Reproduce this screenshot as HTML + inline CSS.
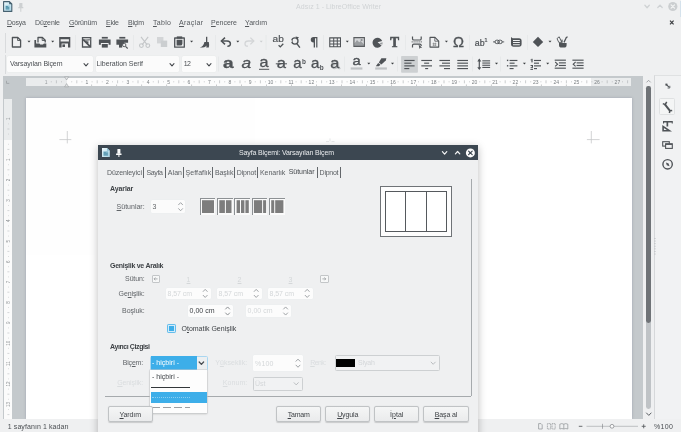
<!DOCTYPE html>
<html lang="tr">
<head>
<meta charset="utf-8">
<title>Adsız 1 - LibreOffice Writer</title>
<style>
html,body{margin:0;padding:0;background:#eff0f1;}
body{width:681px;height:432px;overflow:hidden;position:relative;font-family:"Liberation Sans",sans-serif;font-size:7.0px;}
#w{position:absolute;left:0;top:0;width:681px;height:432px;overflow:hidden;background:#eff0f1;will-change:transform;opacity:0.9999;}
#w div{position:absolute;}
#w .t{position:absolute;white-space:nowrap;line-height:10px;font-size:7.0px;}
#w svg.ov{position:absolute;left:0;top:0;pointer-events:none;font-family:"Liberation Sans",sans-serif;}
u{text-decoration:underline;text-decoration-thickness:0.5px;text-underline-offset:0.8px;}
</style>
</head>
<body>
<div id="w">
<svg class="ov" width="681" height="432" viewBox="0 0 681 432">
<defs><linearGradient id="ig" x1="0" y1="0" x2="1" y2="1"><stop offset="0" stop-color="#eef9fd"/><stop offset="1" stop-color="#a9d5e6"/></linearGradient></defs>
<g><path d="M3.6 1.6 h5.8 l2.4 2.4 v7.4 h-8.2z" fill="url(#ig)" stroke="#45606f" stroke-width="1.1" stroke-linejoin="round"/><path d="M9.2 1.4 l2.9 2.9 h-2.9z" fill="#45606f"/><rect x="5.4" y="5.6" width="4.2" height="4" fill="#8cc3d6"/><path d="M5.8 6.5h2 M5.8 7.7h3.4 M5.8 8.9h3.4" stroke="#3b7d95" stroke-width="0.7"/></g>
<g fill="#cdd0d2"><rect x="19.2" y="3" width="3.2" height="4.4" rx="0.4"/><rect x="18.2" y="7" width="5.2" height="1.3" rx="0.4"/><rect x="20.3" y="8" width="1" height="3.8"/></g>
<path d="M644.9 5.3 L647.1 7.7 L649.3 5.3" fill="none" stroke="#cfd2d4" stroke-width="1.3" stroke-linecap="round" stroke-linejoin="round"/>
<path d="M657.8 7.5 L660 5.1 L662.2 7.5" fill="none" stroke="#cfd2d4" stroke-width="1.3" stroke-linecap="round" stroke-linejoin="round"/>
<circle cx="672.8" cy="6.5" r="4.6" fill="#cbced0"/><path d="M671.1 4.8 l3.4 3.4 M674.5 4.8 l-3.4 3.4" stroke="#f4f5f5" stroke-width="1.2" stroke-linecap="round"/>
<path d="M670 20.7 l3.6 3.6 M673.6 20.7 l-3.6 3.6" stroke="#3a3d40" stroke-width="1.2"/>
<rect x="680.2" y="1" width="0.8" height="16" fill="#cfdfec"/>
</svg>
<span class="t" style="top:2.30px;color:#d0d3d5;letter-spacing:0.045px;left:238.523px;width:200px;text-align:center;">Adsız 1 - LibreOffice Writer</span>
<span class="t" style="top:18.40px;color:#54585c;letter-spacing:-0.215px;left:7px;"><u>D</u>osya</span>
<span class="t" style="top:18.40px;color:#54585c;letter-spacing:-0.115px;left:35px;">Dü<u>z</u>enle</span>
<span class="t" style="top:18.40px;color:#54585c;letter-spacing:-0.198px;left:69px;"><u>G</u>örünüm</span>
<span class="t" style="top:18.40px;color:#54585c;letter-spacing:-0.208px;left:106px;"><u>E</u>kle</span>
<span class="t" style="top:18.40px;color:#54585c;letter-spacing:-0.281px;left:128px;"><u>B</u>içim</span>
<span class="t" style="top:18.40px;color:#54585c;letter-spacing:0.316px;left:153px;"><u>T</u>ablo</span>
<span class="t" style="top:18.40px;color:#54585c;letter-spacing:0.302px;left:179px;"><u>A</u>raçlar</span>
<span class="t" style="top:18.40px;color:#54585c;letter-spacing:-0.013px;left:211px;"><u>P</u>encere</span>
<span class="t" style="top:18.40px;color:#54585c;letter-spacing:-0.013px;left:245px;"><u>Y</u>ardım</span>
<div style="left:4.5px;top:33px;width:1px;height:20px;background:#d9dbdd;"></div>
<div style="left:4.5px;top:55px;width:1px;height:19px;background:#d9dbdd;"></div>
<div style="left:7px;top:56px;width:85.5px;height:16px;background:#fcfcfc;border-radius:1.5px;box-shadow:0 0 0 0.5px #e9ebec;"></div>
<span class="t" style="top:59.30px;color:#4a4e52;letter-spacing:-0.097px;left:10px;">Varsayılan Biçem</span>
<div style="left:95.5px;top:56px;width:83px;height:16px;background:#fcfcfc;border-radius:1.5px;box-shadow:0 0 0 0.5px #e9ebec;"></div>
<span class="t" style="top:59.30px;color:#4a4e52;letter-spacing:-0.040px;left:96.5px;">Liberation Serif</span>
<div style="left:181.5px;top:56px;width:34px;height:16px;background:#fcfcfc;border-radius:1.5px;box-shadow:0 0 0 0.5px #e9ebec;"></div>
<span class="t" style="top:59.30px;color:#4a4e52;letter-spacing:-0.600px;left:183.7px;">12</span>
<div style="left:2.6px;top:75.8px;width:640.6px;height:343px;background:#c4c9cc;"></div>
<div style="left:26px;top:78px;width:605px;height:7.6px;background:#fdfdfd;"></div>
<div style="left:26px;top:78px;width:40.6px;height:7.6px;background:#eaeced;"></div>
<div style="left:590.5px;top:78px;width:40.5px;height:7.6px;background:#eaeced;"></div>
<div style="left:25.8px;top:98.4px;width:606.2px;height:321px;background:#ffffff;box-shadow:0 0 2.5px rgba(110,115,140,0.45);"></div>
<div style="left:4.2px;top:99px;width:8px;height:320px;background:#fbfbfb;"></div>
<div style="left:4.2px;top:99px;width:8px;height:40.6px;background:#eaeced;"></div>
<div style="left:643px;top:75.5px;width:12.5px;height:343.5px;background:#eff0f1;"></div>
<div style="left:646.4px;top:86px;width:4.7px;height:323px;background:#bfc3c6;border-radius:2.4px;"></div>
<div style="left:646.4px;top:86px;width:4.7px;height:237px;background:#6f7377;border-radius:2.4px;"></div>
<div style="left:654.3px;top:75px;width:26.7px;height:344px;background:#f1f2f3;border-left:1px solid #d6d8da;border-top:1px solid #dfe1e2;"></div>
<div style="left:659.4px;top:98px;width:15.2px;height:17.4px;background:#f4f5f5;border:0.6px solid #dfe1e2;border-radius:1.5px;box-sizing:border-box;"></div>
<div style="left:0px;top:418.8px;width:681px;height:13.2px;background:#eff0f1;"></div>
<span class="t" style="top:421.70px;color:#4a4e52;letter-spacing:0.081px;left:7.8px;">1 sayfanın 1 kadarı</span>
<span class="t" style="top:421.70px;color:#4a4e52;letter-spacing:0.365px;left:654px;">%100</span>
<span class="t" style="top:77.00px;color:#7c8084;font-size:5px;left:-13px;width:200px;text-align:center;">1</span>
<span class="t" style="top:77.00px;color:#7c8084;font-size:5px;left:7.4px;width:200px;text-align:center;">2</span>
<span class="t" style="top:77.00px;color:#7c8084;font-size:5px;left:27.8px;width:200px;text-align:center;">3</span>
<span class="t" style="top:77.00px;color:#7c8084;font-size:5px;left:48.2px;width:200px;text-align:center;">4</span>
<span class="t" style="top:77.00px;color:#7c8084;font-size:5px;left:68.6px;width:200px;text-align:center;">5</span>
<span class="t" style="top:77.00px;color:#7c8084;font-size:5px;left:89px;width:200px;text-align:center;">6</span>
<span class="t" style="top:77.00px;color:#7c8084;font-size:5px;left:109.4px;width:200px;text-align:center;">7</span>
<span class="t" style="top:77.00px;color:#7c8084;font-size:5px;left:129.8px;width:200px;text-align:center;">8</span>
<span class="t" style="top:77.00px;color:#7c8084;font-size:5px;left:150.2px;width:200px;text-align:center;">9</span>
<span class="t" style="top:77.00px;color:#7c8084;font-size:5px;left:170.6px;width:200px;text-align:center;">10</span>
<span class="t" style="top:77.00px;color:#7c8084;font-size:5px;left:191px;width:200px;text-align:center;">11</span>
<span class="t" style="top:77.00px;color:#7c8084;font-size:5px;left:211.4px;width:200px;text-align:center;">12</span>
<span class="t" style="top:77.00px;color:#7c8084;font-size:5px;left:231.8px;width:200px;text-align:center;">13</span>
<span class="t" style="top:77.00px;color:#7c8084;font-size:5px;left:252.2px;width:200px;text-align:center;">14</span>
<span class="t" style="top:77.00px;color:#7c8084;font-size:5px;left:272.6px;width:200px;text-align:center;">15</span>
<span class="t" style="top:77.00px;color:#7c8084;font-size:5px;left:293px;width:200px;text-align:center;">16</span>
<span class="t" style="top:77.00px;color:#7c8084;font-size:5px;left:313.4px;width:200px;text-align:center;">17</span>
<span class="t" style="top:77.00px;color:#7c8084;font-size:5px;left:333.8px;width:200px;text-align:center;">18</span>
<span class="t" style="top:77.00px;color:#7c8084;font-size:5px;left:354.2px;width:200px;text-align:center;">19</span>
<span class="t" style="top:77.00px;color:#7c8084;font-size:5px;left:374.6px;width:200px;text-align:center;">20</span>
<span class="t" style="top:77.00px;color:#7c8084;font-size:5px;left:395px;width:200px;text-align:center;">21</span>
<span class="t" style="top:77.00px;color:#7c8084;font-size:5px;left:415.4px;width:200px;text-align:center;">22</span>
<span class="t" style="top:77.00px;color:#7c8084;font-size:5px;left:435.8px;width:200px;text-align:center;">23</span>
<span class="t" style="top:77.00px;color:#7c8084;font-size:5px;left:456.2px;width:200px;text-align:center;">24</span>
<span class="t" style="top:77.00px;color:#7c8084;font-size:5px;left:476.6px;width:200px;text-align:center;">25</span>
<span class="t" style="top:77.00px;color:#7c8084;font-size:5px;left:497px;width:200px;text-align:center;">26</span>
<span class="t" style="top:77.00px;color:#7c8084;font-size:5px;left:517.4px;width:200px;text-align:center;">27</span>
<span class="t" style="top:77.00px;color:#9a9ea1;font-size:5px;left:-53.8px;width:200px;text-align:center;">1</span>
<svg class="ov" width="681" height="432" viewBox="0 0 681 432">
<path d="M56.4 80.3 v3 M51.3 81.3 v1 M61.5 81.3 v1 M76.8 80.3 v3 M71.7 81.3 v1 M81.9 81.3 v1 M97.2 80.3 v3 M92.1 81.3 v1 M102.3 81.3 v1 M117.6 80.3 v3 M112.5 81.3 v1 M122.7 81.3 v1 M138.0 80.3 v3 M132.9 81.3 v1 M143.1 81.3 v1 M158.4 80.3 v3 M153.3 81.3 v1 M163.5 81.3 v1 M178.8 80.3 v3 M173.7 81.3 v1 M183.9 81.3 v1 M199.2 80.3 v3 M194.1 81.3 v1 M204.3 81.3 v1 M219.6 80.3 v3 M214.5 81.3 v1 M224.7 81.3 v1 M240.0 80.3 v3 M234.9 81.3 v1 M245.1 81.3 v1 M260.4 80.3 v3 M255.3 81.3 v1 M265.5 81.3 v1 M280.8 80.3 v3 M275.7 81.3 v1 M285.9 81.3 v1 M301.2 80.3 v3 M296.1 81.3 v1 M306.3 81.3 v1 M321.6 80.3 v3 M316.5 81.3 v1 M326.7 81.3 v1 M342.0 80.3 v3 M336.9 81.3 v1 M347.1 81.3 v1 M362.4 80.3 v3 M357.3 81.3 v1 M367.5 81.3 v1 M382.8 80.3 v3 M377.7 81.3 v1 M387.9 81.3 v1 M403.2 80.3 v3 M398.1 81.3 v1 M408.3 81.3 v1 M423.6 80.3 v3 M418.5 81.3 v1 M428.7 81.3 v1 M444.0 80.3 v3 M438.9 81.3 v1 M449.1 81.3 v1 M464.4 80.3 v3 M459.3 81.3 v1 M469.5 81.3 v1 M484.8 80.3 v3 M479.7 81.3 v1 M489.9 81.3 v1 M505.2 80.3 v3 M500.1 81.3 v1 M510.3 81.3 v1 M525.6 80.3 v3 M520.5 81.3 v1 M530.7 81.3 v1 M546.0 80.3 v3 M540.9 81.3 v1 M551.1 81.3 v1 M566.4 80.3 v3 M561.3 81.3 v1 M571.5 81.3 v1 M586.8 80.3 v3 M581.7 81.3 v1 M591.9 81.3 v1 M607.2 80.3 v3 M602.1 81.3 v1 M612.3 81.3 v1 M627.6 80.3 v3 M622.5 81.3 v1" stroke="#a9adb0" stroke-width="0.6"/>
<path d="M91.6 84.6 v1.2 M116.6 84.6 v1.2 M141.6 84.6 v1.2 M166.6 84.6 v1.2 M191.6 84.6 v1.2 M216.5 84.6 v1.2 M241.5 84.6 v1.2 M266.5 84.6 v1.2 M291.5 84.6 v1.2 M316.5 84.6 v1.2 M341.5 84.6 v1.2 M366.5 84.6 v1.2 M391.5 84.6 v1.2 M416.5 84.6 v1.2 M441.5 84.6 v1.2 M466.4 84.6 v1.2 M491.4 84.6 v1.2 M516.4 84.6 v1.2 M541.4 84.6 v1.2 M566.4 84.6 v1.2" stroke="#8d9194" stroke-width="0.6"/>
<path d="M64.6 76.8 h4 l-2 3.2z M64.6 86.8 h4 l-2 -3.2z" fill="#e4e6e8" stroke="#9a9da0" stroke-width="0.6"/>
<path d="M6.5 80.8 v2.6 h2.8" fill="none" stroke="#a0a4a7" stroke-width="0.9"/>
<path d="M7.4 129.0 h2 M8 123.9 h0.8 M8 134.1 h0.8 M7.4 149.4 h2 M8 144.3 h0.8 M8 154.5 h0.8 M7.4 169.8 h2 M8 164.7 h0.8 M8 174.9 h0.8 M7.4 190.2 h2 M8 185.1 h0.8 M8 195.3 h0.8 M7.4 210.6 h2 M8 205.5 h0.8 M8 215.7 h0.8 M7.4 231.0 h2 M8 225.9 h0.8 M8 236.1 h0.8 M7.4 251.4 h2 M8 246.3 h0.8 M8 256.5 h0.8 M7.4 271.8 h2 M8 266.7 h0.8 M8 276.9 h0.8 M7.4 292.2 h2 M8 287.1 h0.8 M8 297.3 h0.8 M7.4 312.6 h2 M8 307.5 h0.8 M8 317.7 h0.8 M7.4 333.0 h2 M8 327.9 h0.8 M8 338.1 h0.8 M7.4 353.4 h2 M8 348.3 h0.8 M8 358.5 h0.8 M7.4 373.8 h2 M8 368.7 h0.8 M8 378.9 h0.8 M7.4 394.2 h2 M8 389.1 h0.8 M8 399.3 h0.8 M7.4 414.6 h2 M8 409.5 h0.8" stroke="#b9bcbf" stroke-width="0.6"/>
<text x="0" y="0" transform="translate(10 159.6) rotate(-90)" text-anchor="middle" font-size="4.6" fill="#8b8f92">1</text>
<text x="0" y="0" transform="translate(10 180.0) rotate(-90)" text-anchor="middle" font-size="4.6" fill="#8b8f92">2</text>
<text x="0" y="0" transform="translate(10 200.4) rotate(-90)" text-anchor="middle" font-size="4.6" fill="#8b8f92">3</text>
<text x="0" y="0" transform="translate(10 220.8) rotate(-90)" text-anchor="middle" font-size="4.6" fill="#8b8f92">4</text>
<text x="0" y="0" transform="translate(10 241.2) rotate(-90)" text-anchor="middle" font-size="4.6" fill="#8b8f92">5</text>
<text x="0" y="0" transform="translate(10 261.6) rotate(-90)" text-anchor="middle" font-size="4.6" fill="#8b8f92">6</text>
<text x="0" y="0" transform="translate(10 282.0) rotate(-90)" text-anchor="middle" font-size="4.6" fill="#8b8f92">7</text>
<text x="0" y="0" transform="translate(10 302.4) rotate(-90)" text-anchor="middle" font-size="4.6" fill="#8b8f92">8</text>
<text x="0" y="0" transform="translate(10 322.8) rotate(-90)" text-anchor="middle" font-size="4.6" fill="#8b8f92">9</text>
<text x="0" y="0" transform="translate(10 343.2) rotate(-90)" text-anchor="middle" font-size="4.6" fill="#8b8f92">10</text>
<text x="0" y="0" transform="translate(10 363.6) rotate(-90)" text-anchor="middle" font-size="4.6" fill="#8b8f92">11</text>
<text x="0" y="0" transform="translate(10 384.0) rotate(-90)" text-anchor="middle" font-size="4.6" fill="#8b8f92">12</text>
<text x="0" y="0" transform="translate(10 404.4) rotate(-90)" text-anchor="middle" font-size="4.6" fill="#8b8f92">13</text>
<text x="0" y="0" transform="translate(10 118.8) rotate(-90)" text-anchor="middle" font-size="4.6" fill="#8b8f92">1</text>
<path d="M59.4 139.6 H71.3 M67.3 131 V143.4" stroke="#c6c8c9" stroke-width="0.8"/>
<path d="M586.9 139.6 H599.6 M591.3 131 V143.4" stroke="#c6c8c9" stroke-width="0.8"/>
<path d="M326 141.6 h3 M331.5 141.6 h3 M330 138.4 v3" stroke="#dcdedf" stroke-width="0.7"/>
<path d="M655 238 V256" stroke="#aeb1b4" stroke-width="0.9" stroke-dasharray="0.9 1.7"/>
<path d="M646.8 82.1 L648.6 80.3 L650.4 82.1" fill="none" stroke="#8d9194" stroke-width="0.8" stroke-linecap="round" stroke-linejoin="round"/>
<path d="M646.5 413 L648.8 415.4 L651.1 413" fill="none" stroke="#5a5e62" stroke-width="1.0" stroke-linecap="round" stroke-linejoin="round"/>
<path d="M84 63.7 L86 65.9 L88 63.7" fill="none" stroke="#45494d" stroke-width="1.1" stroke-linecap="round" stroke-linejoin="round"/>
<path d="M170 63.7 L172 65.9 L174 63.7" fill="none" stroke="#45494d" stroke-width="1.1" stroke-linecap="round" stroke-linejoin="round"/>
<path d="M207 63.7 L209 65.9 L211 63.7" fill="none" stroke="#45494d" stroke-width="1.1" stroke-linecap="round" stroke-linejoin="round"/>
<path d="M12.4 37.5 h5.4 l2.8 2.8 v6.7 h-8.2z" fill="none" stroke="#4f5357" stroke-width="1.3" stroke-linejoin="round"/>
<path d="M17.6 37.6 v2.9 h2.9" fill="none" stroke="#4f5357" stroke-width="0.9" />
<path d="M27.5 40.7 h3 l-1.5 1.8z" fill="#3a3d40"/>
<path d="M38 42.6 v-5.1 h4.4 l2.8 2.8 v2.3" fill="none" stroke="#4f5357" stroke-width="1.3" stroke-linejoin="round"/>
<path d="M42.2 37.6 v2.9 h2.9" fill="none" stroke="#4f5357" stroke-width="0.9" />
<path d="M34.4 40 h1.7 v3.4 h3.3 l0.9 1.1 h2.7 l0.9 -1.1 h2.4 v4.2 h-11.9z" fill="#4f5357" />
<path d="M51.2 40.7 h3 l-1.5 1.8z" fill="#3a3d40"/>
<path d="M59.2 36.9 h11.1 v10.7 h-11.1z M60.6 39.3 v2.2 h8.3 v-2.2z M61.6 43.6 v4 h6.4 v-4z" fill="#4f5357" fill-rule="evenodd"/>
<rect x="62.4" y="44.4" width="2.6" height="2.6" fill="#4f5357"/>
<path d="M82.5 37.6 h8.2 v9.4 h-8.2z" fill="none" stroke="#4f5357" stroke-width="1.3" />
<path d="M83 38.4 q3 1.8 7.4 0.2 v1.6 q-4 1.6 -7.4 0z" fill="#8a8d90" />
<path d="M83.2 39.6 l7 7" fill="none" stroke="#4f5357" stroke-width="1.7" />
<path d="M85 41 l3.6 0.4 l-0.6 3z" fill="#4f5357" />
<rect x="101.8" y="36.9" width="6" height="1.7" fill="#4f5357"/>
<path d="M98.9 39.4 h11.7 v5.4 h-2 v-1.8 h-7.7 v1.8 h-2z" fill="#4f5357" />
<rect x="101.8" y="44" width="6" height="3.6" fill="#4f5357"/>
<rect x="119.3" y="36.9" width="6" height="1.7" fill="#4f5357"/>
<path d="M116.4 39.4 h11.7 v3.4 h-4 v2 h-5.7 v-1.8 h0 v1.8 h-2z" fill="#4f5357" />
<rect x="119" y="44" width="3.2" height="3.6" fill="#4f5357"/>
<circle cx="124.2" cy="45" r="1.7" fill="#eff0f1" stroke="#4f5357" stroke-width="0.9"/>
<path d="M125.5 46.3 l2.2 2.2" fill="none" stroke="#4f5357" stroke-width="1.1" />
<path d="M141 36.9 l6.2 8 M148.2 36.9 l-6.2 8" fill="none" stroke="#c3c6c8" stroke-width="1.1" />
<circle cx="141.4" cy="45.6" r="1.9" fill="none" stroke="#c3c6c8" stroke-width="1.1"/><circle cx="147.8" cy="45.6" r="1.9" fill="none" stroke="#c3c6c8" stroke-width="1.1"/>
<rect x="157" y="37" width="6.4" height="6.4" fill="#d3d5d7"/>
<rect x="160.8" y="40.6" width="6.4" height="6.4" fill="#cbced0"/>
<path d="M174.7 38 h9.6 v9.2 h-9.6z" fill="none" stroke="#4f5357" stroke-width="1.3" stroke-linejoin="round"/>
<rect x="176.8" y="36.4" width="5.4" height="2.2" fill="#4f5357"/>
<path d="M176.6 39.8 h5.8 v3.6 q0 2.2 -2.2 2.2 h-3.6z" fill="#4f5357" />
<path d="M190.1 40.7 h3 l-1.5 1.8z" fill="#3a3d40"/>
<rect x="206" y="36.8" width="1.3" height="5.6" fill="#4f5357"/>
<path d="M204.4 42 h4.4 q0.6 2.4 0 5.4 q-1.4 0.3 -2.6 0 q0.4 -1 0.2 -2 q-1 2.2 -6.6 2.2 q4 -1.6 4.6 -5.6z" fill="#4f5357" />
<path d="M225 37.6 l-3.6 3.4 l3.6 3.4" fill="none" stroke="#4f5357" stroke-width="1.5" />
<path d="M221.8 41 h5.2 q3.4 0 3.4 2.8 q0 2.6 -3 2.4" fill="none" stroke="#4f5357" stroke-width="1.5" />
<path d="M236.3 40.7 h3 l-1.5 1.8z" fill="#3a3d40"/>
<path d="M250.4 37.6 l3.4 3.4 l-3.4 3.4" fill="none" stroke="#d3d5d7" stroke-width="1.3" />
<path d="M253.4 41 h-5 q-3.4 0 -3.4 2.8 q0 2.6 3 2.4" fill="none" stroke="#d3d5d7" stroke-width="1.3" />
<path d="M259.7 40.7 h3 l-1.5 1.8z" fill="#cbced0"/>
<text x="272.6" y="41.8" font-size="8.2" fill="#4f5357" stroke="#4f5357" stroke-width="0.15" textLength="11.2" lengthAdjust="spacingAndGlyphs">ab</text>
<path d="M278.6 45.2 l1.7 1.7 l3 -3.2" fill="none" stroke="#4f5357" stroke-width="1.3" />
<circle cx="294.9" cy="41" r="3.1" fill="none" stroke="#4f5357" stroke-width="1.3"/>
<path d="M296.9 43.6 l3 4" fill="none" stroke="#4f5357" stroke-width="1.4" />
<path d="M295.6 36.6 l3.4 0.6 l-2.2 2.6z" fill="#4f5357" />
<rect x="290.2" y="40.2" width="1.6" height="1.8" fill="#eff0f1"/>
<path d="M313.6 37 h3.8 v10.6 h-1.2 v-9.4 h-1.2 v9.4 h-1.3 v-5 a2.9 2.8 0 0 1 -0.1 -5.6z" fill="#4f5357" />
<path d="M329.2 37.3 h11.8 v10 h-11.8z M330.3 38.6 v1.9 h2.9 v-1.9z M334.2 38.6 v1.9 h2.6 v-1.9z M337.8 38.6 v1.9 h2.2 v-1.9z M330.3 41.5 v1.9 h2.9 v-1.9z M334.2 41.5 v1.9 h2.6 v-1.9z M337.8 41.5 v1.9 h2.2 v-1.9z M330.3 44.4 v1.8 h2.9 v-1.8z M334.2 44.4 v1.8 h2.6 v-1.8z M337.8 44.4 v1.8 h2.2 v-1.8z" fill="#4f5357" fill-rule="evenodd"/>
<path d="M345.8 40.7 h3 l-1.5 1.8z" fill="#3a3d40"/>
<rect x="353.9" y="37.6" width="10.5" height="8.8" fill="#d4d6d8"/>
<path d="M354.4 46 v-2.6 l2.6 -3.4 l2.2 2.2 l1.6 -1.2 l3.2 3.4 v1.6z" fill="#9a9da0" />
<circle cx="361.6" cy="40" r="1.1" fill="#8a8d90"/>
<path d="M353.9 37.6 h10.5 v8.8 h-10.5z" fill="none" stroke="#5a5d60" stroke-width="1.1" />
<path d="M377.6 42.2 L382.2 41 A5 5 0 1 0 381.6 45.6z" fill="#4f5357" />
<path d="M379 43.2 L382.6 42.3 A5 5 0 0 1 382.2 44.8z" fill="#9a9da0" />
<text x="390.3" y="47" font-family="Liberation Serif, serif" font-size="14.6" font-weight="bold" fill="#4f5357" stroke="#4f5357" stroke-width="0.7" textLength="8.8" lengthAdjust="spacingAndGlyphs">T</text>
<path d="M412.5 36.5 v2.2 q0 1.3 1.3 1.3 h6.1 q1.3 0 1.3 -1.3 v-2.2" fill="none" stroke="#4f5357" stroke-width="1.2" />
<path d="M412.5 47.6 v-2.2 q0 -1.3 1.3 -1.3 h6.1 q1.3 0 1.3 1.3 v0.6" fill="none" stroke="#4f5357" stroke-width="1.2" />
<path d="M411.6 41.9 h10.4" fill="none" stroke="#4f5357" stroke-width="0.9" stroke-dasharray="1.2 0.7"/>
<path d="M418.6 44.6 l3.6 3.2 l-1.8 0 l-0.9 1.2z" fill="#4f5357" />
<path d="M430 37.4 h5 l3.7 3.7 v6 h-8.7z" fill="none" stroke="#4f5357" stroke-width="1.1" stroke-linejoin="round"/>
<path d="M434.8 37.6 v3.6 h3.6" fill="none" stroke="#4f5357" stroke-width="0.8" />
<path d="M433.6 42.6 v3.6 M435.4 42.6 v3.6 M432.6 43.6 h3.8 M432.6 45.2 h3.8" fill="none" stroke="#7a7d80" stroke-width="0.6" />
<path d="M444.9 40.7 h3 l-1.5 1.8z" fill="#3a3d40"/>
<text x="458.4" y="47.3" text-anchor="middle" font-size="14" fill="#4f5357" stroke="#4f5357" stroke-width="0.35" textLength="11" lengthAdjust="spacingAndGlyphs">Ω</text>
<text x="474.8" y="46.2" font-size="8.6" fill="#4f5357" stroke="#4f5357" stroke-width="0.2" textLength="9.8" lengthAdjust="spacingAndGlyphs">ab</text>
<text x="485.9" y="42" text-anchor="middle" font-size="6" font-weight="bold" fill="#4f5357">1</text>
<rect x="495" y="40.2" width="4.4" height="3.4" rx="1.7" fill="none" stroke="#4f5357" stroke-width="1"/><rect x="497.8" y="40.2" width="4.4" height="3.4" rx="1.7" fill="none" stroke="#4f5357" stroke-width="1"/>
<path d="M493 41.9 h2 M502.2 41.9 h2" fill="none" stroke="#4f5357" stroke-width="0.9" />
<path d="M511 36.9 l1.6 1.4 h6.4 a2.6 2.6 0 0 1 2.6 2.6 v3.2 a2.6 2.6 0 0 1 -2.6 2.6 h-5.4 a2.6 2.6 0 0 1 -2.6 -2.6z M513 40 v1 h6.8 v-1z M513 42.1 v1 h6.8 v-1z M513 44.2 v1 h6.8 v-1z" fill="#4f5357" fill-rule="evenodd"/>
<path d="M538 36.7 L543.2 41.9 L538 47.1 L532.8 41.9z" fill="#4f5357" />
<path d="M548.5 40.7 h3 l-1.5 1.8z" fill="#3a3d40"/>
<path d="M559 43 h7.6 v2 a2.6 2.6 0 0 1 -2.6 2.6 h-2.4 a2.6 2.6 0 0 1 -2.6 -2.6z" fill="#4f5357" />
<path d="M557 38.6 l2.2 -1.8 l2.6 5.6 h-3z" fill="none" stroke="#4f5357" stroke-width="0.9" />
<path d="M564 42.4 l1.6 -3.4 M565.6 39 q0.4 -2 2 -2.2" fill="none" stroke="#4f5357" stroke-width="1.3" />
<rect x="561.4" y="39.6" width="1.2" height="3" fill="#4f5357"/>
<path d="M75.5 35 v15" stroke="#e5e7e8" stroke-width="0.8"/>
<path d="M133.5 35 v15" stroke="#e5e7e8" stroke-width="0.8"/>
<path d="M215.5 35 v15" stroke="#e5e7e8" stroke-width="0.8"/>
<path d="M266 35 v15" stroke="#e5e7e8" stroke-width="0.8"/>
<path d="M323.5 35 v15" stroke="#e5e7e8" stroke-width="0.8"/>
<path d="M405.5 35 v15" stroke="#e5e7e8" stroke-width="0.8"/>
<path d="M469.5 35 v15" stroke="#e5e7e8" stroke-width="0.8"/>
<path d="M527.5 35 v15" stroke="#e5e7e8" stroke-width="0.8"/>
<text x="223" y="67.5" font-size="15" font-weight="bold" font-style="normal" fill="#4f5357" stroke="#4f5357" stroke-width="0.3" textLength="10.6" lengthAdjust="spacingAndGlyphs">a</text>
<text x="241.4" y="67.5" font-size="15" font-weight="normal" font-style="italic" fill="#4f5357" stroke="#4f5357" stroke-width="0.3" textLength="9.6" lengthAdjust="spacingAndGlyphs">a</text>
<text x="259.6" y="67.1" font-size="14.4" font-weight="normal" font-style="normal" fill="#4f5357" stroke="#4f5357" stroke-width="0.3" textLength="9" lengthAdjust="spacingAndGlyphs">a</text>
<path d="M259 69.3 h10.2" fill="none" stroke="#4f5357" stroke-width="1.0" />
<text x="276.8" y="67.5" font-size="15" font-weight="normal" font-style="normal" fill="#4f5357" stroke="#4f5357" stroke-width="0.3" textLength="9.2" lengthAdjust="spacingAndGlyphs">a</text>
<path d="M275.8 63.8 h11.2" fill="none" stroke="#4f5357" stroke-width="1.0" />
<text x="293.2" y="67.5" font-size="14.4" font-weight="normal" font-style="normal" fill="#4f5357" stroke="#4f5357" stroke-width="0.3" textLength="8.4" lengthAdjust="spacingAndGlyphs">a</text>
<text x="304" y="64" text-anchor="middle" font-size="6.4" font-weight="bold" fill="#4f5357">b</text>
<text x="311" y="67.5" font-size="14.4" font-weight="normal" font-style="normal" fill="#4f5357" stroke="#4f5357" stroke-width="0.3" textLength="8.4" lengthAdjust="spacingAndGlyphs">a</text>
<text x="321.8" y="70" text-anchor="middle" font-size="6.4" font-weight="bold" fill="#4f5357">b</text>
<text x="331.3" y="68.5" font-size="15" font-weight="normal" font-style="normal" fill="#c3c6c8" stroke="#c3c6c8" stroke-width="0.3" textLength="9" lengthAdjust="spacingAndGlyphs">a</text>
<text x="330.2" y="67.5" font-size="15" font-weight="normal" font-style="normal" fill="#4f5357" stroke="#4f5357" stroke-width="0.3" textLength="9" lengthAdjust="spacingAndGlyphs">a</text>
<text x="352.6" y="64.9" font-size="12.6" font-weight="normal" font-style="normal" fill="#4f5357" stroke="#4f5357" stroke-width="0.4" textLength="8.2" lengthAdjust="spacingAndGlyphs">a</text>
<rect x="350.7" y="67.4" width="11.7" height="2.2" fill="#bfc2c4"/>
<path d="M367.3 62.7 h3 l-1.5 1.8z" fill="#3a3d40"/>
<path d="M381.4 58.2 h5 l-0.6 2.2 l-4.4 4 l-2.6 -2z" fill="#4f5357" />
<path d="M378.2 63 l2.4 1.8 l-1.8 1.4 h-3z" fill="#4f5357" />
<rect x="375.2" y="67.4" width="11.7" height="2.2" fill="#bfc2c4"/>
<path d="M391 62.7 h3 l-1.5 1.8z" fill="#3a3d40"/>
<rect x="401.1" y="55.9" width="16.8" height="16.8" rx="0.8" fill="#cdd0d2"/>
<g fill="#4f5357"><rect x="404.3" y="59.9" width="10.3" height="1.15"/><rect x="404.3" y="62.6" width="7.2" height="1.15"/><rect x="404.3" y="65.3" width="10.3" height="1.15"/><rect x="404.3" y="68" width="5" height="1.15"/></g>
<g fill="#4f5357"><rect x="421.3" y="59.9" width="10.7" height="1.15"/><rect x="424.15" y="62.6" width="5" height="1.15"/><rect x="421.3" y="65.3" width="10.7" height="1.15"/><rect x="425.15" y="68" width="3" height="1.15"/></g>
<g fill="#4f5357"><rect x="439.4" y="59.9" width="10.6" height="1.15"/><rect x="442" y="62.6" width="8" height="1.15"/><rect x="439.4" y="65.3" width="10.6" height="1.15"/><rect x="444" y="68" width="6" height="1.15"/></g>
<g fill="#4f5357"><rect x="457.3" y="59.9" width="10.7" height="1.15"/><rect x="457.3" y="62.6" width="10.7" height="1.15"/><rect x="457.3" y="65.3" width="10.7" height="1.15"/><rect x="457.3" y="68" width="10.7" height="1.15"/></g>
<path d="M479.3 59.6 v9.4" fill="none" stroke="#4f5357" stroke-width="1.2" />
<path d="M477.3 61.4 l2 -2.8 l2 2.8z M477.3 67.2 l2 2.8 l2 -2.8z" fill="#4f5357" />
<rect x="482.3" y="60.3" width="7.8" height="1.1" fill="#4f5357"/>
<rect x="482.3" y="62.5" width="7.8" height="1.1" fill="#4f5357"/>
<rect x="482.3" y="64.7" width="7.8" height="1.1" fill="#4f5357"/>
<rect x="482.3" y="66.9" width="7.8" height="1.1" fill="#4f5357"/>
<path d="M495 62.7 h3 l-1.5 1.8z" fill="#3a3d40"/>
<rect x="509.6" y="59.9" width="7.8" height="1.15" fill="#4f5357"/>
<rect x="509.6" y="62.6" width="5" height="1.15" fill="#4f5357"/>
<rect x="509.6" y="65.3" width="7.8" height="1.15" fill="#4f5357"/>
<rect x="509.6" y="68" width="4" height="1.15" fill="#4f5357"/>
<rect x="506.9" y="59.7" width="1.4" height="1.4" fill="#4f5357"/>
<rect x="506.9" y="65.1" width="1.4" height="1.4" fill="#4f5357"/>
<path d="M522.9 62.7 h3 l-1.5 1.8z" fill="#3a3d40"/>
<rect x="531.4" y="58.8" width="1.2" height="3.6" fill="#4f5357"/>
<rect x="530.6" y="59.4" width="1" height="0.9" fill="#4f5357"/>
<rect x="530.6" y="65" width="2.4" height="1" fill="#4f5357"/>
<rect x="531.8" y="66" width="1.2" height="1.2" fill="#4f5357"/>
<rect x="530.6" y="67.2" width="2.4" height="1" fill="#4f5357"/>
<rect x="530.4" y="69" width="2.6" height="0.9" fill="#4f5357"/>
<rect x="534" y="59.9" width="7" height="1.15" fill="#4f5357"/>
<rect x="534" y="62.6" width="5" height="1.15" fill="#4f5357"/>
<rect x="534" y="65.3" width="7" height="1.15" fill="#4f5357"/>
<rect x="534" y="68" width="3" height="1.15" fill="#4f5357"/>
<path d="M546.2 62.7 h3 l-1.5 1.8z" fill="#3a3d40"/>
<rect x="554.7" y="59.6" width="11.2" height="1.15" fill="#4f5357"/>
<rect x="554.7" y="67.6" width="11.2" height="1.15" fill="#4f5357"/>
<rect x="558.9" y="62.3" width="7" height="1.15" fill="#4f5357"/>
<rect x="558.9" y="64.9" width="7" height="1.15" fill="#4f5357"/>
<path d="M555.2 62 l2.4 2.2 l-2.4 2.2" fill="none" stroke="#4f5357" stroke-width="1.1" />
<rect x="572.4" y="59.6" width="11.2" height="1.15" fill="#4f5357"/>
<rect x="572.4" y="67.6" width="11.2" height="1.15" fill="#4f5357"/>
<rect x="576.6" y="62.3" width="7" height="1.15" fill="#4f5357"/>
<rect x="576.6" y="64.9" width="7" height="1.15" fill="#4f5357"/>
<path d="M575.6 62 l-2.4 2.2 l2.4 2.2" fill="none" stroke="#4f5357" stroke-width="1.1" />
<path d="M218.5 56.5 v15" stroke="#e5e7e8" stroke-width="0.8"/>
<path d="M344.5 56.5 v15" stroke="#e5e7e8" stroke-width="0.8"/>
<path d="M397.5 56.5 v15" stroke="#e5e7e8" stroke-width="0.8"/>
<path d="M472.5 56.5 v15" stroke="#e5e7e8" stroke-width="0.8"/>
<path d="M500.5 56.5 v15" stroke="#e5e7e8" stroke-width="0.8"/>
<path d="M666.2 84.4 l2.8 2.8" fill="none" stroke="#4f5357" stroke-width="1.1" />
<rect x="665.4" y="83.6" width="2" height="2" fill="#4f5357"/>
<path d="M667.6 88 h2.2 v-2.2" fill="none" stroke="#4f5357" stroke-width="0.9" />
<path d="M664.9 104.3 L670 110.9" fill="none" stroke="#4f5357" stroke-width="2.0" />
<path d="M666.7 101.8 L665.2 104.6 L662.8 103.6" fill="none" stroke="#4f5357" stroke-width="1.5" stroke-linejoin="round"/>
<path d="M672.2 110.4 L669.8 110.8 L669.4 113" fill="none" stroke="#4f5357" stroke-width="1.5" stroke-linejoin="round"/>
<path d="M663 121 h9.8 v2.5 h-1.1 v-1.1 h-3.5 v4 h-1.7 v-4 h-2.4 v1.1 h-1.1z" fill="#4f5357" />
<path d="M662.3 125 l9.7 6.4 h-9.7z M663.9 128.1 v2 h3z" fill="#4f5357" fill-rule="evenodd"/>
<rect x="662.7" y="141.7" width="6.6" height="4.4" fill="none" stroke="#4f5357" stroke-width="1.1"/><rect x="665.6" y="143.8" width="6.7" height="4.6" fill="#f1f2f3" stroke="#4f5357" stroke-width="1.1"/><rect x="665.6" y="143.6" width="6.7" height="1.3" fill="#4f5357"/>
<circle cx="667.6" cy="164.3" r="4.7" fill="none" stroke="#4f5357" stroke-width="1.4"/>
<path d="M665.9 162.6 l2.7 0.9 l0.9 2.7 l-2.7 -0.9z" fill="#4f5357" />
<g fill="none" stroke="#8d9194" stroke-width="0.7"><path d="M538.6 423.6 h2.4 l1.2 1.2 v4.2 h-3.6z"/><path d="M547.4 423.6 h3.2 v5.4 h-3.2z M552 423.6 h3.2 v5.4 h-3.2z" stroke-dasharray="1.2 0.5"/><path d="M559.8 424.2 q2 -1.2 4 0 q2 -1.2 4 0 v4.8 q-2 -1 -4 0 q-2 -1 -4 0z M563.8 424.2 v4.8"/></g>
<path d="M578.8 426.3 h3.6" stroke="#5a5e62" stroke-width="0.9"/>
<path d="M586.5 426.3 h51.5" stroke="#9a9ea1" stroke-width="0.6"/><path d="M602.5 423.8 v5" stroke="#7c8084" stroke-width="0.6"/>
<circle cx="612" cy="426.3" r="1.9" fill="#fcfcfc" stroke="#7c8084" stroke-width="0.7"/>
<path d="M641.7 426.3 h4 M643.7 424.3 v4" stroke="#5a5e62" stroke-width="0.9"/>
</svg>
<div style="left:98px;top:145px;width:380px;height:300px;background:#eff0f1;box-shadow:0 2px 8px 0 rgba(0,0,0,0.27);"></div>
<div style="left:98px;top:145px;width:380px;height:15.4px;background:#3c4751;"></div>
<span class="t" style="top:148.10px;color:#e9ebed;letter-spacing:-0.127px;left:186.436px;width:200px;text-align:center;">Sayfa Biçemi: Varsayılan Biçem</span>
<span class="t" style="top:168.10px;color:#5a5e62;letter-spacing:-0.080px;left:107px;">Düzenleyici</span>
<span class="t" style="top:168.10px;color:#5a5e62;letter-spacing:-0.327px;left:146.4px;">Sayfa</span>
<span class="t" style="top:168.10px;color:#5a5e62;letter-spacing:0.061px;left:167.8px;">Alan</span>
<span class="t" style="top:168.10px;color:#5a5e62;letter-spacing:0.079px;left:185.5px;">Şeffaflık</span>
<span class="t" style="top:168.10px;color:#5a5e62;letter-spacing:-0.132px;left:215px;">Başlık</span>
<span class="t" style="top:168.10px;color:#5a5e62;letter-spacing:-0.167px;left:236.8px;">Dipnot</span>
<span class="t" style="top:168.10px;color:#5a5e62;letter-spacing:-0.055px;left:260px;">Kenarlık</span>
<span class="t" style="top:168.10px;color:#5a5e62;letter-spacing:-0.267px;left:319.6px;">Dipnot</span>
<span class="t" style="top:167.10px;color:#45494d;letter-spacing:-0.040px;left:288.7px;">Sütunlar</span>
<div style="left:143.2px;top:166.8px;width:0.7px;height:11.6px;background:#63676b;"></div>
<div style="left:164.6px;top:166.8px;width:0.7px;height:11.6px;background:#63676b;"></div>
<div style="left:183px;top:166.8px;width:0.7px;height:11.6px;background:#63676b;"></div>
<div style="left:212.2px;top:166.8px;width:0.7px;height:11.6px;background:#63676b;"></div>
<div style="left:234.2px;top:166.8px;width:0.7px;height:11.6px;background:#63676b;"></div>
<div style="left:257.4px;top:166.8px;width:0.7px;height:11.6px;background:#63676b;"></div>
<div style="left:317.2px;top:166.8px;width:0.7px;height:11.6px;background:#63676b;"></div>
<div style="left:340px;top:166.8px;width:0.7px;height:11.6px;background:#63676b;"></div>
<div style="left:470.6px;top:179px;width:0.9px;height:217.4px;background:#a6aaad;"></div>
<div style="left:105.4px;top:395.5px;width:366.1px;height:0.9px;background:#a6aaad;"></div>
<span class="t" style="top:184.30px;color:#3f4347;font-weight:bold;letter-spacing:-0.096px;left:110px;">Ayarlar</span>
<span class="t" style="top:201.70px;color:#606468;letter-spacing:-0.004px;right:536.404px;"><u>S</u>ütunlar:</span>
<div style="left:151px;top:200px;width:34.4px;height:13.4px;background:#fcfcfc;border-radius:1.5px;box-shadow:0 0 0 0.5px #eceeef;"></div>
<span class="t" style="top:202.10px;color:#606468;left:152.6px;">3</span>
<div style="left:199.8px;top:197.8px;width:15.6px;height:17px;background:#fbfbfb;border-top:0.8px solid #8d9194;border-left:0.8px solid #8d9194;box-sizing:border-box;"></div>
<div style="left:217.1px;top:197.8px;width:15.6px;height:17px;background:#fbfbfb;border-top:0.8px solid #8d9194;border-left:0.8px solid #8d9194;box-sizing:border-box;"></div>
<div style="left:234.4px;top:197.8px;width:15.6px;height:17px;background:#fbfbfb;border-top:0.8px solid #8d9194;border-left:0.8px solid #8d9194;box-sizing:border-box;"></div>
<div style="left:251.7px;top:197.8px;width:15.6px;height:17px;background:#fbfbfb;border-top:0.8px solid #8d9194;border-left:0.8px solid #8d9194;box-sizing:border-box;"></div>
<div style="left:269px;top:197.8px;width:15.6px;height:17px;background:#fbfbfb;border-top:0.8px solid #8d9194;border-left:0.8px solid #8d9194;box-sizing:border-box;"></div>
<div style="left:380px;top:186px;width:71.8px;height:51px;background:#fdfdfd;border:0.8px solid #6f7377;box-sizing:border-box;"></div>
<div style="left:385.4px;top:191.4px;width:61.2px;height:40.8px;background:#ffffff;border:0.8px solid #55595d;box-sizing:border-box;"></div>
<div style="left:405.2px;top:191.4px;width:0.8px;height:40.8px;background:#55595d;"></div>
<div style="left:425.8px;top:191.4px;width:0.8px;height:40.8px;background:#55595d;"></div>
<span class="t" style="top:260.90px;color:#3f4347;font-weight:bold;letter-spacing:-0.271px;left:110px;">Genişlik ve Aralık</span>
<span class="t" style="top:273.90px;color:#606468;letter-spacing:-0.150px;right:536.55px;">Sütun:</span>
<span class="t" style="top:288.80px;color:#606468;letter-spacing:-0.109px;right:536.509px;">Ge<u>n</u>işlik:</span>
<span class="t" style="top:306.10px;color:#606468;letter-spacing:-0.078px;right:536.478px;">Boşluk:</span>
<span class="t" style="top:274.50px;color:#d4d7d9;left:88.5px;width:200px;text-align:center;text-decoration:underline;">1</span>
<span class="t" style="top:274.50px;color:#d4d7d9;left:139.5px;width:200px;text-align:center;text-decoration:underline;">2</span>
<span class="t" style="top:274.50px;color:#d4d7d9;left:190.5px;width:200px;text-align:center;text-decoration:underline;">3</span>
<div style="left:166px;top:287.6px;width:44.6px;height:11.8px;background:#fcfcfc;border-radius:1.5px;box-shadow:0 0 0 0.5px #eceeef;"></div>
<span class="t" style="top:288.90px;color:#d4d7d9;letter-spacing:-0.068px;left:167.6px;">8,57 cm</span>
<div style="left:217px;top:287.6px;width:44.6px;height:11.8px;background:#fcfcfc;border-radius:1.5px;box-shadow:0 0 0 0.5px #eceeef;"></div>
<span class="t" style="top:288.90px;color:#d4d7d9;letter-spacing:-0.068px;left:218.6px;">8,57 cm</span>
<div style="left:268px;top:287.6px;width:44.6px;height:11.8px;background:#fcfcfc;border-radius:1.5px;box-shadow:0 0 0 0.5px #eceeef;"></div>
<span class="t" style="top:288.90px;color:#d4d7d9;letter-spacing:-0.068px;left:269.6px;">8,57 cm</span>
<div style="left:188px;top:304.8px;width:44.8px;height:12.4px;background:#fcfcfc;border-radius:1.5px;box-shadow:0 0 0 0.5px #eceeef;"></div>
<span class="t" style="top:306.40px;color:#3f4347;letter-spacing:0.016px;left:189.6px;">0,00 cm</span>
<div style="left:246px;top:304.8px;width:44.8px;height:12.4px;background:#fcfcfc;border-radius:1.5px;box-shadow:0 0 0 0.5px #eceeef;"></div>
<span class="t" style="top:306.40px;color:#d4d7d9;letter-spacing:0.016px;left:247.6px;">0,00 cm</span>
<div style="left:151.5px;top:274.6px;width:8.4px;height:8.6px;background:#f7f8f8;border:0.7px solid #c3c6c8;border-radius:1px;box-sizing:border-box;"></div>
<div style="left:320.2px;top:274.6px;width:8.4px;height:8.6px;background:#f7f8f8;border:0.7px solid #c3c6c8;border-radius:1px;box-sizing:border-box;"></div>
<div style="left:167px;top:324px;width:9px;height:9px;background:#d3ebf9;border:1px solid #62bdec;border-radius:1.2px;box-sizing:border-box;"></div>
<div style="left:169px;top:326px;width:5px;height:5px;background:#3daee9;"></div>
<span class="t" style="top:323.50px;color:#3f4347;letter-spacing:-0.005px;left:181.5px;">O<u>t</u>omatik Genişlik</span>
<span class="t" style="top:341.90px;color:#3f4347;font-weight:bold;letter-spacing:-0.404px;left:110px;">Ayırıcı Çizgisi</span>
<span class="t" style="top:358.10px;color:#606468;letter-spacing:-0.184px;right:537.984px;">Biç<u>e</u>m:</span>
<span class="t" style="top:378.10px;color:#dadddf;letter-spacing:-0.107px;right:537.907px;"><u>G</u>enişlik:</span>
<span class="t" style="top:358.10px;color:#dadddf;letter-spacing:0.052px;right:433.748px;">Y<u>ü</u>kseklik:</span>
<span class="t" style="top:378.10px;color:#dadddf;letter-spacing:0.052px;right:433.748px;"><u>K</u>onum:</span>
<span class="t" style="top:358.10px;color:#dadddf;letter-spacing:-0.574px;right:355.374px;"><u>R</u>enk:</span>
<div style="left:253px;top:355.2px;width:50px;height:16px;background:#fcfcfc;border-radius:1.5px;box-shadow:0 0 0 0.5px #eceeef;"></div>
<span class="t" style="top:358.60px;color:#d4d7d9;letter-spacing:0.198px;left:255px;">%100</span>
<div style="left:253px;top:376.6px;width:49.6px;height:14px;background:#f1f2f3;border:0.7px solid #cdd0d2;border-radius:1.5px;box-sizing:border-box;"></div>
<span class="t" style="top:378.90px;color:#d4d7d9;left:255px;">Üst</span>
<div style="left:334.6px;top:355.2px;width:105.2px;height:15.4px;background:#f1f2f3;border:0.7px solid #cdd0d2;border-radius:1.5px;box-sizing:border-box;"></div>
<div style="left:335.8px;top:359px;width:19.4px;height:7.8px;background:#000;"></div>
<span class="t" style="top:358.10px;color:#d4d7d9;letter-spacing:-0.129px;left:358px;">Siyah</span>
<div style="left:150.2px;top:355.6px;width:57.4px;height:15px;background:#eceff1;border:0.7px solid #a9d6f0;border-radius:1.5px;box-sizing:border-box;"></div>
<div style="left:150.6px;top:356px;width:46.2px;height:14.4px;background:#3daee9;"></div>
<span class="t" style="top:358.10px;color:#ffffff;letter-spacing:0.016px;left:152px;">- hiçbiri -</span>
<div style="left:150.2px;top:370.4px;width:57.2px;height:42.6px;background:#fdfdfd;box-shadow:0 0 0 0.5px #c9ccce, 0 1px 2px rgba(0,0,0,0.2);"></div>
<span class="t" style="top:371.70px;color:#3f4347;letter-spacing:0.016px;left:152px;">- hiçbiri -</span>
<div style="left:151px;top:386.8px;width:38.6px;height:1px;background:#33373a;"></div>
<div style="left:150.6px;top:392.4px;width:56.8px;height:10.4px;background:#3daee9;"></div>
<div style="left:151.6px;top:397.2px;width:38px;height:0px;border-top:0.7px dotted rgba(255,255,255,0.4);"></div>
<div style="left:151.5px;top:407px;width:8px;height:1.4px;background:#9b9fa2;"></div>
<div style="left:162.5px;top:407px;width:8.5px;height:1.4px;background:#9b9fa2;"></div>
<div style="left:173.6px;top:407px;width:8.4px;height:1.4px;background:#9b9fa2;"></div>
<div style="left:185px;top:407px;width:4.6px;height:1.4px;background:#9b9fa2;"></div>
<div style="left:107.8px;top:405.8px;width:45px;height:16.6px;background:linear-gradient(#f5f6f6,#eaebec);border:0.7px solid #c0c3c5;border-radius:2px;box-sizing:border-box;box-shadow:0 0.7px 1px rgba(0,0,0,0.16);"></div>
<span class="t" style="top:409.50px;color:#3f4347;letter-spacing:-0.113px;left:30.2438px;width:200px;text-align:center;"><u>Y</u>ardım</span>
<div style="left:276.4px;top:405.8px;width:44.8px;height:16.6px;background:linear-gradient(#f5f6f6,#eaebec);border:0.7px solid #c0c3c5;border-radius:2px;box-sizing:border-box;box-shadow:0 0.7px 1px rgba(0,0,0,0.16);"></div>
<span class="t" style="top:409.50px;color:#3f4347;letter-spacing:-0.163px;left:198.718px;width:200px;text-align:center;"><u>T</u>amam</span>
<div style="left:325.2px;top:405.8px;width:45.2px;height:16.6px;background:linear-gradient(#f5f6f6,#eaebec);border:0.7px solid #c0c3c5;border-radius:2px;box-sizing:border-box;box-shadow:0 0.7px 1px rgba(0,0,0,0.16);"></div>
<span class="t" style="top:409.50px;color:#3f4347;letter-spacing:-0.099px;left:247.75px;width:200px;text-align:center;"><u>U</u>ygula</span>
<div style="left:374px;top:405.8px;width:45.4px;height:16.6px;background:linear-gradient(#f5f6f6,#eaebec);border:0.7px solid #c0c3c5;border-radius:2px;box-sizing:border-box;box-shadow:0 0.7px 1px rgba(0,0,0,0.16);"></div>
<span class="t" style="top:409.50px;color:#3f4347;letter-spacing:0.009px;left:296.704px;width:200px;text-align:center;">İ<u>p</u>tal</span>
<div style="left:423.2px;top:405.8px;width:45.6px;height:16.6px;background:linear-gradient(#f5f6f6,#eaebec);border:0.7px solid #c0c3c5;border-radius:2px;box-sizing:border-box;box-shadow:0 0.7px 1px rgba(0,0,0,0.16);"></div>
<span class="t" style="top:409.50px;color:#3f4347;letter-spacing:-0.110px;left:345.945px;width:200px;text-align:center;"><u>B</u>aşa al</span>
<svg class="ov" width="681" height="432" viewBox="0 0 681 432">
<path d="M102 148 h5 l2.8 2.8 v6.3 h-7.8z" fill="url(#ig)"/><path d="M107 148 l2.8 2.8 h-2.8z" fill="#8fc1d6"/><rect x="103.4" y="151.4" width="4.8" height="4.4" fill="#7db4c9"/><path d="M103.8 152.5h2 M103.8 153.7h4 M103.8 154.9h4" stroke="#4a8aa3" stroke-width="0.6"/>
<g fill="#fcfcfc"><rect x="117.4" y="148.9" width="3" height="4.8" rx="0.3"/><rect x="116" y="153.4" width="5.6" height="1.5" rx="0.4"/><rect x="118.4" y="154.6" width="1" height="2.4"/></g>
<path d="M442.4 151.7 L444.6 154.1 L446.8 151.7" fill="none" stroke="#f4f5f5" stroke-width="1.2" stroke-linecap="round" stroke-linejoin="round"/>
<path d="M455.4 153.9 L457.6 151.5 L459.8 153.9" fill="none" stroke="#f4f5f5" stroke-width="1.2" stroke-linecap="round" stroke-linejoin="round"/>
<circle cx="470.4" cy="152.9" r="4.5" fill="#fcfcfc"/><path d="M468.6 151.1 l3.6 3.6 M472.2 151.1 l-3.6 3.6" stroke="#3c4751" stroke-width="1.2" stroke-linecap="round"/>
<rect x="202" y="200.2" width="12" height="12.8" fill="#7d7d7d"/>
<rect x="219.3" y="200.2" width="5.6" height="12.8" fill="#7d7d7d"/>
<rect x="225.9" y="200.2" width="5.6" height="12.8" fill="#7d7d7d"/>
<rect x="236.6" y="200.2" width="3.4" height="12.8" fill="#7d7d7d"/>
<rect x="241" y="200.2" width="3.4" height="12.8" fill="#7d7d7d"/>
<rect x="245.4" y="200.2" width="3.4" height="12.8" fill="#7d7d7d"/>
<rect x="253.9" y="200.2" width="8.2" height="12.8" fill="#7d7d7d"/>
<rect x="263.1" y="200.2" width="3" height="12.8" fill="#7d7d7d"/>
<rect x="271.2" y="200.2" width="3" height="12.8" fill="#7d7d7d"/>
<rect x="275.2" y="200.2" width="8.2" height="12.8" fill="#7d7d7d"/>
<path d="M178.6 204.75 L180.6 202.65 L182.6 204.75" fill="none" stroke="#a0a4a7" stroke-width="1.0" stroke-linecap="round" stroke-linejoin="round"/>
<path d="M178.6 208.65 L180.6 210.75 L182.6 208.65" fill="none" stroke="#a0a4a7" stroke-width="1.0" stroke-linecap="round" stroke-linejoin="round"/>
<path d="M203.2 291.45 L205.2 289.35 L207.2 291.45" fill="none" stroke="#a0a4a7" stroke-width="1.0" stroke-linecap="round" stroke-linejoin="round"/>
<path d="M203.2 295.35 L205.2 297.45 L207.2 295.35" fill="none" stroke="#a0a4a7" stroke-width="1.0" stroke-linecap="round" stroke-linejoin="round"/>
<path d="M254.2 291.45 L256.2 289.35 L258.2 291.45" fill="none" stroke="#a0a4a7" stroke-width="1.0" stroke-linecap="round" stroke-linejoin="round"/>
<path d="M254.2 295.35 L256.2 297.45 L258.2 295.35" fill="none" stroke="#a0a4a7" stroke-width="1.0" stroke-linecap="round" stroke-linejoin="round"/>
<path d="M305.2 291.45 L307.2 289.35 L309.2 291.45" fill="none" stroke="#a0a4a7" stroke-width="1.0" stroke-linecap="round" stroke-linejoin="round"/>
<path d="M305.2 295.35 L307.2 297.45 L309.2 295.35" fill="none" stroke="#a0a4a7" stroke-width="1.0" stroke-linecap="round" stroke-linejoin="round"/>
<path d="M225.6 309.05 L227.6 306.95 L229.6 309.05" fill="none" stroke="#8d9194" stroke-width="1.0" stroke-linecap="round" stroke-linejoin="round"/>
<path d="M225.6 312.95 L227.6 315.05 L229.6 312.95" fill="none" stroke="#8d9194" stroke-width="1.0" stroke-linecap="round" stroke-linejoin="round"/>
<path d="M283.6 309.05 L285.6 306.95 L287.6 309.05" fill="none" stroke="#a0a4a7" stroke-width="1.0" stroke-linecap="round" stroke-linejoin="round"/>
<path d="M283.6 312.95 L285.6 315.05 L287.6 312.95" fill="none" stroke="#a0a4a7" stroke-width="1.0" stroke-linecap="round" stroke-linejoin="round"/>
<path d="M296 361.25 L298 359.15 L300 361.25" fill="none" stroke="#a0a4a7" stroke-width="1.0" stroke-linecap="round" stroke-linejoin="round"/>
<path d="M296 365.15 L298 367.25 L300 365.15" fill="none" stroke="#a0a4a7" stroke-width="1.0" stroke-linecap="round" stroke-linejoin="round"/>
<path d="M157.6 278.9 h-3.4 M155.4 277.5 l-1.4 1.4 l1.4 1.4" fill="none" stroke="#8d9194" stroke-width="0.7"/>
<path d="M322.4 278.9 h3.4 M324.4 277.5 l1.4 1.4 l-1.4 1.4" fill="none" stroke="#8d9194" stroke-width="0.7"/>
<path d="M199.2 362 L201.4 364.4 L203.6 362" fill="none" stroke="#4a4e52" stroke-width="1.3" stroke-linecap="round" stroke-linejoin="round"/>
<path d="M294.1 382.7 L296.2 384.9 L298.3 382.7" fill="none" stroke="#b4b8bb" stroke-width="0.9" stroke-linecap="round" stroke-linejoin="round"/>
<path d="M431.1 362.1 L433.2 364.3 L435.3 362.1" fill="none" stroke="#b4b8bb" stroke-width="0.9" stroke-linecap="round" stroke-linejoin="round"/>
</svg>
</div>
</body>
</html>
